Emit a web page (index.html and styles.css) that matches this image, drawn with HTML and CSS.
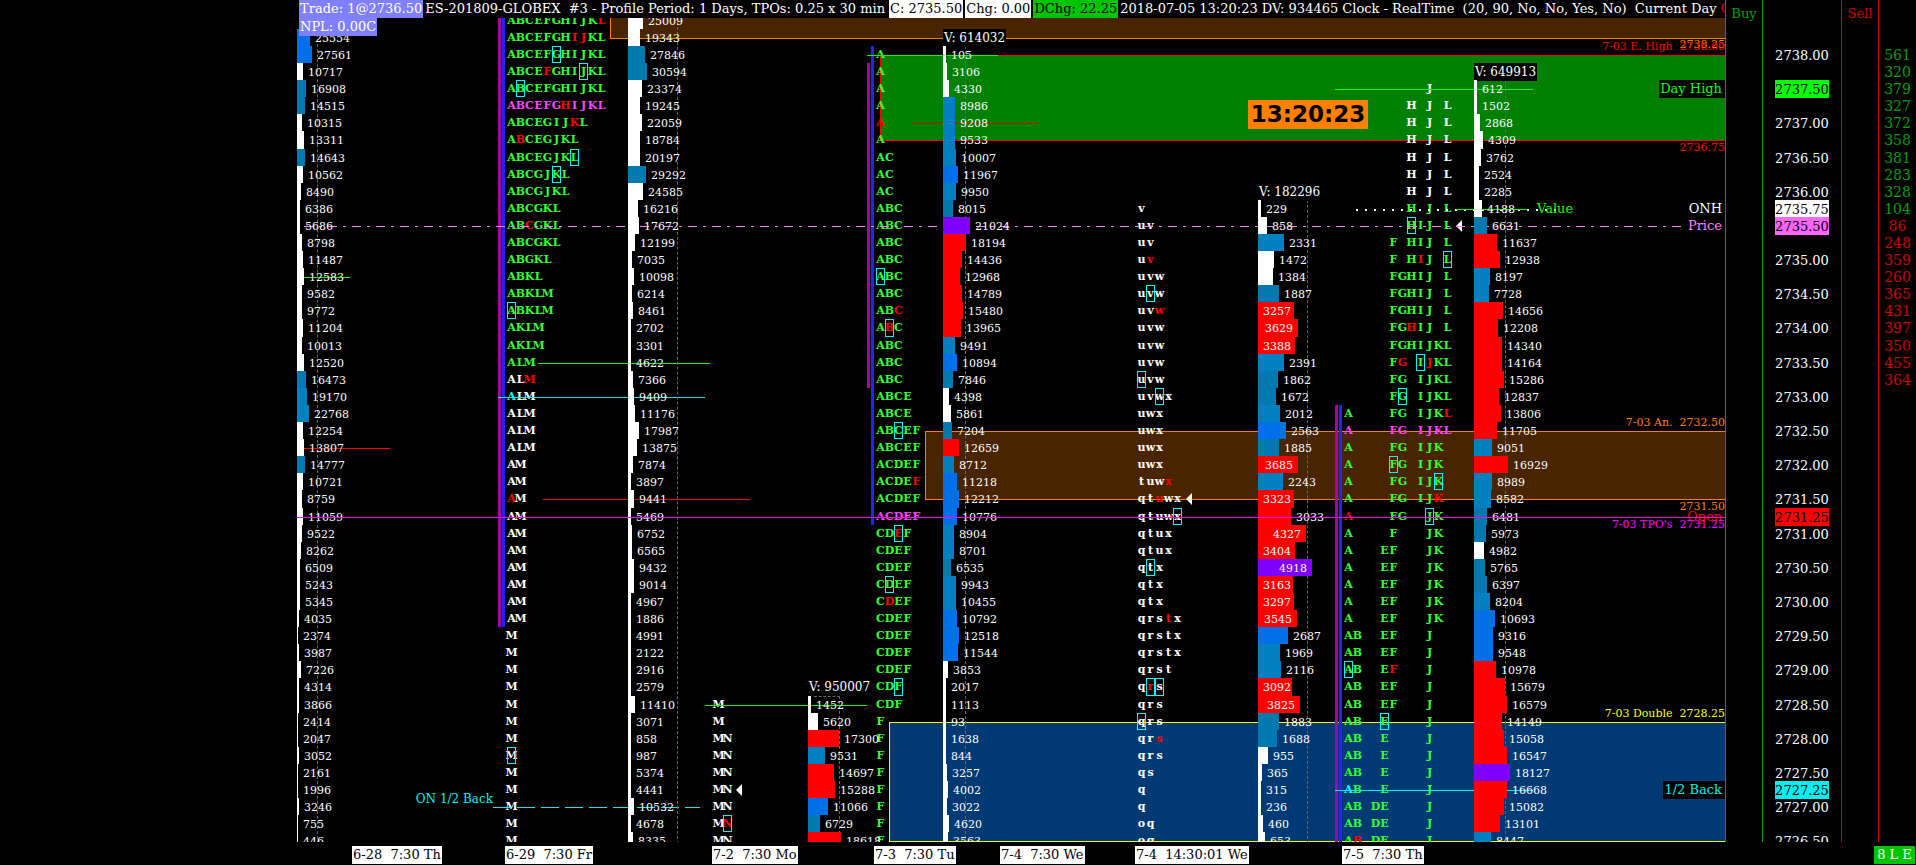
FILE: index.html
```html
<!DOCTYPE html>
<html lang="en">
<head>
  <meta charset="UTF-8">
  <meta name="viewport" content="width=device-width, initial-scale=1.0">
  <title>ES-201809-GLOBEX #3 - Profile</title>
  <link rel="stylesheet" href="styles.css">
</head>
<body>
  <div class="main">
    <!-- Chart -->
    <div class="chart">
      <header class="header">
        <span class="tag trade">Trade: 1@2736.50</span>
        <span class="title">ES-201809-GLOBEX&nbsp; #3 - Profile Period: 1 Days, TPOs: 0.25 x 30 min</span>
        <span class="tag white">C: 2735.50</span>
        <span class="tag white">Chg: 0.00</span>
        <span class="tag green">DChg: 22.25</span>
        <span class="status">2018-07-05 13:20:23 DV: 934465 Clock - RealTime&nbsp; (20, 90, No, No, Yes, No)&nbsp; Current Day <span class="red-text">Op</span></span>
      </header>
      <div class="plot">
        <div class="ladder" id="ladder"></div>
        <span class="npl">NPL: 0.00C</span>
        <time class="clock">13:20:23</time>
      </div>
    </div>

    <!-- Order columns -->
    <div class="side buy"><span class="side-title">Buy</span></div>
    <div class="side prices" id="prices"></div>
    <div class="side sell"><span class="side-title">Sell</span></div>
    <div class="side delta" id="delta"></div>
  </div>

  <footer class="footer">
    <div class="dates">
      <span></span>
      <span class="date">6-28&nbsp; 7:30 Th</span>
      <span class="date">6-29&nbsp; 7:30 Fr</span>
      <span class="date">7-2&nbsp; 7:30 Mo</span>
      <span class="date">7-3&nbsp; 7:30 Tu</span>
      <span class="date">7-4&nbsp; 7:30 We</span>
      <span class="date">7-4&nbsp; 14:30:01 We</span>
      <span class="date">7-5&nbsp; 7:30 Th</span>
    </div>
    <span class="position">8 L E</span>
  </footer>

  <script src="script.js"></script>
</body>
</html>
```

FILE: styles.css
```css
* {
  box-sizing: border-box;
}
body {
  margin: 0;
  height: 100vh;
  display: flex;
  flex-direction: column;
  overflow: hidden;
  background-color: #000;
  color: #fff;
  font-family: "DejaVu Serif", serif;
  font-size: 13px;
  line-height: 18px;
}
.main {
  display: flex;
  flex: 1;
  min-height: 0;
}
.chart {
  display: flex;
  flex-direction: column;
  flex: 1;
  min-width: 0;
}

/* Header */
.header {
  display: flex;
  gap: 2px;
  height: 18px;
  padding-left: 299px;
  overflow: hidden;
  white-space: nowrap;
}
.header > span {
  flex: none;
}
.tag {
  padding: 0 1px;
  color: #000;
}
.trade {
  background-color: #8080ff;
  color: #fff;
}
.title {
  padding-right: 2px;
}
.white {
  background-color: #fff;
}
.green {
  background-color: #00c400;
}
.red-text {
  color: #f00;
}

/* Plot */
.plot {
  position: relative;
  flex: 1;
  overflow: hidden;
}
.npl {
  position: absolute;
  z-index: 5;
  top: 0;
  left: 299px;
  padding: 0 1px;
  background-color: #8080ff;
}
.clock {
  position: absolute;
  z-index: 5;
  top: 82px;
  left: 1248px;
  width: 120px;
  background-color: #ff8000;
  color: #000;
  font: bold 23px/29px "DejaVu Sans", sans-serif;
  text-align: center;
}
.ladder {
  position: relative;
  display: grid;
  grid-template-columns:
    minmax(0, 297fr) minmax(0, 201fr) minmax(0, 130fr) minmax(0, 77fr)
    minmax(0, 103fr) minmax(0, 59fr) minmax(0, 76fr) minmax(0, 185fr)
    minmax(0, 130fr) minmax(0, 77fr) minmax(0, 139fr) minmax(0, 251fr);
  margin-top: -6px;
}
.row {
  display: flex;
  height: 17px;
  line-height: 17px;
}
.row:nth-child(21n + 8),
.row:nth-child(21n + 19) {
  height: 18px;
}

/* Volume bars */
.volume {
  position: relative;
  z-index: 3;
  font-size: 11px;
}
.bar {
  flex: none;
}
.bar-white { background-color: #fff; }
.bar-low { background-color: #0078b0; }
.bar-mid { background-color: #0080c0; }
.bar-high { background-color: #0070e8; }
.bar-red { background-color: #f00; }
.bar-max { background-color: #8000ff; }
.amount {
  padding: 0 5px;
  line-height: 19px;
}
.bar .amount {
  text-align: right;
}
.total {
  height: 18px;
  padding: 0 1px;
  background-color: #000;
  font-size: 12px;
  line-height: 18px;
  white-space: nowrap;
}
.range {
  position: absolute;
  left: 6px;
  bottom: 0;
  z-index: -1;
  border-top: 1px dashed #666;
  border-right: 1px dashed #666;
}

/* Letters */
.tpo {
  position: relative;
  z-index: 1;
  padding-left: 9px;
  font-size: 11px;
  font-weight: bold;
}
.letter {
  display: flex;
  justify-content: center;
  flex: none;
  width: 9px;
}
.g { color: #3f3; }
.w { color: #fff; }
.m { color: #f4f; }
.red { color: #f00; }
.cyan { color: #0ff; }
.boxed {
  outline: 1px solid #0ff;
  outline-offset: -1px;
}
.arrow {
  align-self: center;
  margin-left: 4px;
  border: 6px solid transparent;
  border-left-width: 0;
  border-right: 6px solid #fff;
}
.area {
  position: absolute;
  width: 3px;
}
.area-purple {
  left: 0;
  background-color: #a0a;
}
.area-blue {
  left: 4px;
  background-color: #22f;
}

/* Zones, lines and labels */
.zone {
  position: absolute;
  right: 0;
  border: 1px solid;
  border-right: 0;
}
.zone-brown {
  background-color: #482400;
  border-color: #ff8000;
}
.zone-green {
  background-color: #008000;
  border-color: #f00;
}
.zone-blue {
  background-color: #003a75;
  border-color: #ff0;
}
.line {
  position: absolute;
  z-index: 2;
  height: 1px;
}
.line-green { background-color: #0f0; }
.line-red { background-color: #f00; }
.line-cyan { background-color: #00f0f0; }
.line-dark { background-color: #c01000; }
.line-magenta {
  z-index: 4;
  background-color: #f0f;
}
.line-dashed {
  background: repeating-linear-gradient(90deg, #00f0f0 0 18px, transparent 18px 24px);
}
.line-dots {
  height: 2px;
  background: repeating-linear-gradient(90deg, #fff 0 2px, transparent 2px 9px);
}
.line-price {
  background: repeating-linear-gradient(90deg, #ff80ff 0 9px, transparent 9px 15px, #ff80ff 15px 18px, transparent 18px 24px);
}
.label {
  position: absolute;
  z-index: 3;
  padding: 0 3px 0 1px;
  line-height: 18px;
  white-space: pre;
}
.label-right {
  right: 0;
}
.small {
  padding: 0;
  font-size: 11px;
}
.medium {
  font-size: 12px;
}
.dark { background-color: #000; }
.c-red { color: #f00; }
.c-orange { color: #ff8000; }
.c-magenta { color: #f0f; }
.c-yellow { color: #ff0; }
.c-green { color: #0f0; }
.c-cyan { color: #00f0f0; }
.c-pink { color: #ff80ff; }

/* Side columns */
.side {
  flex: none;
  overflow: hidden;
  border-left: 1px solid;
  text-align: center;
}
.side .row {
  justify-content: center;
}
.side-title {
  display: block;
  margin-top: 5px;
}
.buy {
  width: 37px;
  border-color: #00a000;
  color: #00a000;
}
.prices {
  width: 79px;
  padding-top: 12px;
  border-color: #00a000;
}
.sell {
  width: 37px;
  border-color: #d00000;
  color: #d00000;
}
.delta {
  width: 38px;
  padding-top: 12px;
  border-color: #d00000;
  font-size: 14px;
}
.delta .row {
  line-height: 19px;
}
.up { color: #00a000; }
.down { color: #d00000; }
.price {
  width: 54px;
  height: 18px;
  line-height: 19px;
}
.p-green { background-color: #0f0; color: #000; }
.p-white { background-color: #fff; color: #000; }
.p-pink { background-color: #ff66ff; color: #000; }
.p-red { background-color: #f00; color: #000; }
.p-cyan { background-color: #00f0f0; color: #000; }

/* Footer */
.footer {
  display: flex;
  height: 23px;
  padding: 4px 1px 0 0;
}
.dates {
  display: grid;
  flex: 1;
  grid-template-columns:
    minmax(0, 352fr) minmax(0, 153fr) minmax(0, 207fr) minmax(0, 162fr)
    minmax(0, 126fr) minmax(0, 135fr) minmax(0, 207fr) minmax(0, 532fr);
}
.date {
  justify-self: start;
  height: 18px;
  padding: 0 1px;
  background-color: #fff;
  color: #000;
  white-space: nowrap;
}
.position {
  width: 41px;
  height: 18px;
  background-color: #00c400;
  text-align: center;
}
```

FILE: script.js
```js
const TOP_PRICE = 2738.5;
const ROWS = 49;
const CHART_WIDTH = 1725;

// Volume profiles: start price, peak volume, width of the peak bar
const volumes = [
  { start: 2738.25, peak: 47500, width: 25, range: 20, data: [25554, 27561, 10717, 16908, 14515, 10315, 13311, 14643, 10562, 8490, 6386, 5686, 8798, 11487, 12583, 9582, 9772, 11204, 10013, 12520, 16473, 19170, 22768, 12254, 13807, 14777, 10721, 8759, 11059, 9522, 8262, 6509, 5243, 5345, 4035, 2374, 3987, 7226, 4314, 3866, 2414, 2047, 3052, 2161, 1996, 3246, 755, 446], min: 1 },
  { start: 2738.5, peak: 88000, width: 54, range: 49, data: [25009, 19343, 27846, 30594, 23374, 19245, 22059, 18784, 20197, 29292, 24585, 16216, 17672, 12199, 7035, 10098, 6214, 8461, 2702, 3301, 4622, 7366, 9409, 11176, 17987, 13875, 7874, 3897, 9441, 5469, 6752, 6565, 9432, 9014, 4967, 1886, 4991, 2122, 2916, 2579, 11410, 3071, 858, 987, 5374, 4441, 10532, 4678, 8335], min: 3 },
  { start: 2728.5, peak: 22000, width: 39, range: 31, total: "V: 950007", data: [1452, 5620, 17300, 9531, 14697, 15288, 11066, 6729, 18618], min: 3 },
  { start: 2738, peak: 21024, width: 27, range: 22, total: "V: 614032", data: [105, 3106, 4330, 8986, 9208, 9533, 10007, 11967, 9950, 8015, 21024, 18194, 14436, 12968, 14789, 15480, 13965, 9491, 10894, 7846, 4398, 5861, 7204, 12659, 8712, 11218, 12212, 10776, 8904, 8701, 6535, 9943, 10455, 10792, 12518, 11544, 3853, 2017, 1113, 93, 1638, 844, 3257, 4002, 3022, 4620, 3563], min: 3 },
  { start: 2735.75, peak: 4918, width: 54, range: 49, total: "V: 182296", data: [229, 858, 2331, 1472, 1384, 1887, 3257, 3629, 3388, 2391, 1862, 1672, 2012, 2563, 1885, 3685, 2243, 3323, 3033, 4327, 3404, 4918, 3163, 3297, 3545, 2687, 1969, 2116, 3092, 3825, 1883, 1688, 955, 365, 315, 236, 460, 653], min: 3 },
  { start: 2737.5, peak: 18127, width: 36, range: 31, total: "V: 649913", data: [612, 1502, 2868, 4309, 3762, 2524, 2285, 4188, 6631, 11637, 12938, 8197, 7728, 14656, 12208, 14340, 14164, 15286, 12837, 13806, 11705, 9051, 16929, 8989, 8582, 6481, 5973, 4982, 5765, 6397, 8204, 10693, 9316, 9548, 10978, 15679, 16579, 14149, 15058, 16547, 18127, 16668, 15082, 13101, 8447], min: 3 }
];

// Letters: ! red, [ boxed, @ red and boxed, ~ cyan, < arrow. Row colour comes first.
const tpos = [
  {
    start: 2738.5,
    areas: [["purple", 0, 36], ["blue", 0, 36]],
    rows: "g ABCEFGHIJK!L|g ABCEFGH!I!JKL|g ABCEF[GHIJKL|g ABCE!FGHI[JKL|g A[BCEFGHIJKL|m ABCEFG!HIJKL|g ABCEGIJ!KL|g A!BCEGJKL|g ABCEGJK[L|g ABCGJ[KL|g ABCGJKL|g ABCGKL|g AB!CGKL|g ABCGKL|g ABGKL|g ABKL|g ABKLM|g [ABKLM|g AKLM|g AKLM|g ALM|w AL!M|w ~ALM|w ALM|w ALM|w ALM|w AM|w AM|w !AM|w AM|w AM|w AM|w AM|w AM|w AM|w AM|w M|w M|w M|w M|w M|w M|w M|w [M|w M|w M|w M|w M|w M"
  },
  {
    start: 2728.5,
    areas: [],
    rows: "w M|w M|w MN|w MN|w MN|w MN<|w MN|w M@N|w MN"
  },
  {
    start: 2738,
    areas: [["purple", 3, 22], ["blue", 2, 30]],
    rows: "g A|g A|g A|g A|g !A|g A|g AC|g AC|g AC|g ABC|g ABC|g ABC|g ABC|g [ABC|g ABC|g AB!C|g A@BC|g ABC|g ABC|g ABC|g ABCE|g ABCE|g AB[CEF|g ABCEF|g ACDEF|g ACDE!F|g ACDEF|m ACDEF|g CD@EF|g CDEF|g CDEF|g C[DEF|g C!DEF|g CDEF|g CDEF|g CDEF|g CDEF|g CD[F|g CDF|g F|g F|g F|g F|g F|g F|g F|g F"
  },
  {
    start: 2735.75,
    areas: [],
    rows: "w v|w uv|w uv|w u!v|w uvw|w u[vw|w uv!w|w uvw|w uvw|w uvw|w [uvw|w uv[wx|w uwx|w uwx|w uwx|w uwx|w tuw!x|w qt!uwx<|w qtuw[x|w qtux|w qtux|w q[tx|w qtx|w qtx|w qrs!tx|w qrstx|w qrstx|w qrst|w q@r[s|w qrs|w [qrs|w qr!s|w qrs|w qs|w q|w q|w oq|w oq"
  },
  {
    start: 2737.5,
    areas: [["purple", 23, 49], ["blue", 23, 49]],
    split: true,
    rows: "w J|w HJL|w HJL|w HJL|w HJL|w HJL|w HJL|g HJL|g [HIJL<|g FHIJL|g FH!IJ[L|g FGHIJL|g FGHIJL|g FGHIJL|g FG!HIJL|g FGHIJKL|g F!G[I!JKL|g FGIJKL|g F[GIJKL|g AFGIJK!L|m AFGIJKL|g AFGIJK|g A[FGIJK|g AFGIJ[K|g AFGIJ!K|g !AFG[JK|g AFJK|g AEFJK|g AEFJK|g AEFJK|g AEFJK|g AEFJK|g ABEFJ|g ABEFJ|g [ABE!FJ|g ABEFJ|g ABEFJ|g AB[EJ|g ABEJ|g ABEJ|g ABEJ|g ~ABEJ|g ABDEJ|g ABDEJ|g A!BDEJ"
  }
];

// Column order; the column index is the grid track
const columns = [
  { volume: volumes[0] },
  { tpo: tpos[0] },
  { volume: volumes[1] },
  { tpo: tpos[1] },
  { volume: volumes[2] },
  { tpo: tpos[2] },
  { volume: volumes[3] },
  { tpo: tpos[3] },
  { volume: volumes[4] },
  { tpo: tpos[4] },
  { volume: volumes[5] }
];

// colour, left, top price, bottom price
const zones = [
  ["brown", 610, 2738.5, 2738.25],
  ["green", 880, 2738, 2736.75],
  ["brown", 925, 2732.5, 2731.5],
  ["blue", 889, 2728.25, 2726.5]
];

// style, price, from, to
const lines = [
  ["price", 2735.5, 304, 1682],
  ["magenta", 2731.25, 297, 1725],
  ["green", 2734.75, 302, 350],
  ["red", 2732.25, 303, 390],
  ["green", 2733.5, 538, 710],
  ["cyan", 2733, 498, 705],
  ["red", 2731.5, 543, 750],
  ["dashed", 2727, 493, 700],
  ["green", 2728.5, 705, 867],
  ["green", 2738, 867, 998],
  ["dark", 2737, 912, 1038],
  ["green", 2737.5, 1335, 1533],
  ["dots", 2735.75, 1356, 1558],
  ["green", 2735.75, 1456, 1527],
  ["cyan", 2727.25, 1335, 1533]
];

// text, classes, price, shift from the price line
const labels = [
  ["2738.25", "small c-orange", 2738, -10],
  ["7-03 E. High  2738.00", "small c-red", 2738, -8],
  ["Day High", "dark c-green", 2737.5, 0],
  ["2736.75", "small c-red", 2736.75, 8],
  ["ONH", "", 2735.75, 0],
  ["Price", "c-pink", 2735.5, 0],
  ["7-03 An.  2732.50", "small c-orange", 2732.5, -8],
  ["2731.50", "small c-orange", 2731.5, 8],
  ["Open", "c-red", 2731.25, 0],
  ["7-03 TPO's  2731.25", "small c-magenta", 2731.25, 8],
  ["7-03 Double  2728.25", "small c-yellow", 2728.25, -8],
  ["1/2 Back", "dark c-cyan", 2727.25, 0]
];

const deltas = [561, 320, 379, 327, 372, 358, 381, 283, 328, 104, 86, 248, 359, 260, 365, 431, 397, 350, 455, 364];
const marked = { 2737.5: "p-green", 2735.75: "p-white", 2735.5: "p-pink", 2731.25: "p-red", 2727.25: "p-cyan" };

const ladder = document.getElementById("ladder");

function add(parent, className, text) {
  const el = document.createElement("div");
  el.className = className;
  if (text !== undefined) el.textContent = text;
  parent.appendChild(el);
  return el;
}

function rowIndex(price) {
  return (TOP_PRICE - price) * 4;
}

// Same row heights as in the stylesheet
function rowTop(index) {
  let top = 0;
  for (let n = 1; n <= index; n++) {
    top += n % 21 === 8 || n % 21 === 19 ? 18 : 17;
  }
  return top;
}

function lineTop(price) {
  return rowTop(rowIndex(price)) + 9;
}

function percent(x) {
  return (x / CHART_WIDTH) * 100 + "%";
}

function barClass(value, peak) {
  if (value === peak) return "bar-max";
  if (value >= peak * 0.6) return "bar-red";
  if (value >= peak * 0.5) return "bar-high";
  if (value >= peak * 0.4) return "bar-mid";
  if (value >= peak * 0.3) return "bar-low";
  return "bar-white";
}

function drawVolume(column, profile) {
  const first = rowIndex(profile.start);
  for (let i = 0; i < ROWS; i++) {
    const row = add(column, "row");
    if (profile.total && i === first - 1) {
      add(row, "total", profile.total);
    }
    const value = profile.data[i - first];
    if (value === undefined) continue;
    const width = Math.max(profile.min, Math.round((value / profile.peak) * profile.width));
    const bar = add(row, "bar " + barClass(value, profile.peak));
    bar.style.width = width + "px";
    const fits = width > String(value).length * 7 + 5;
    add(fits ? bar : row, "amount", value);
  }
  const range = add(column, "range");
  range.style.top = rowTop(first) + "px";
  range.style.width = profile.range - 5 + "px";
}

function drawTpo(column, profile) {
  const first = rowIndex(profile.start);
  const rows = profile.rows.split("|");
  for (let i = 0; i < ROWS; i++) {
    const row = add(column, "row");
    if (!rows[i - first]) continue;
    const [color, text] = rows[i - first].split(" ");
    row.classList.add(color);
    let mark = "";
    let cell = 0;
    for (const ch of text) {
      if (ch === "<") {
        add(row, "arrow");
      } else if ("![@~".includes(ch)) {
        mark = { "!": " red", "[": " boxed", "@": " red boxed", "~": " cyan" }[ch];
      } else {
        // split profiles keep one cell for every letter of the alphabet
        while (profile.split && cell < ch.charCodeAt(0) - 65) {
          add(row, "letter");
          cell++;
        }
        add(row, "letter" + mark, ch);
        mark = "";
        cell++;
      }
    }
  }
  profile.areas.forEach(([name, from, to]) => {
    const area = add(column, "area area-" + name);
    area.style.top = rowTop(from) + "px";
    area.style.height = rowTop(to) - rowTop(from) + "px";
  });
}

zones.forEach(([name, left, top, bottom]) => {
  const zone = add(ladder, "zone zone-" + name);
  zone.style.left = percent(left);
  zone.style.top = (top === TOP_PRICE ? 0 : lineTop(top)) + "px";
  zone.style.height = lineTop(bottom) - (top === TOP_PRICE ? 0 : lineTop(top)) + 1 + "px";
});

add(ladder, "spacer");
columns.forEach(({ volume, tpo }) => {
  const column = add(ladder, volume ? "volume" : "tpo");
  if (volume) drawVolume(column, volume);
  else drawTpo(column, tpo);
});

lines.forEach(([name, price, from, to]) => {
  const line = add(ladder, "line line-" + name);
  line.style.left = percent(from);
  line.style.width = percent(to - from);
  line.style.top = lineTop(price) + "px";
});

labels.forEach(([text, classes, price, shift]) => {
  const label = add(ladder, "label label-right " + classes, text);
  label.style.top = lineTop(price) - 9 + shift + "px";
});

const value = add(ladder, "label c-green", "Value");
value.style.left = percent(1536);
value.style.top = lineTop(2735.75) - 9 + "px";

const onBack = add(ladder, "label medium c-cyan", "ON 1/2 Back");
onBack.style.right = percent(CHART_WIDTH - 496);
onBack.style.top = lineTop(2727) - 17 + "px";

// Price axis and delta column
const prices = document.getElementById("prices");
const delta = document.getElementById("delta");
for (let i = 0; i < ROWS; i++) {
  const price = TOP_PRICE - i / 4;
  const row = add(prices, "row");
  if (i > 1 && (i % 2 === 0 || marked[price])) {
    add(row, "price " + (marked[price] || ""), price.toFixed(2));
  }
  const deltaRow = add(delta, "row");
  const count = deltas[i - 2];
  if (count) add(deltaRow, i < 12 ? "up" : "down", count);
}
```
